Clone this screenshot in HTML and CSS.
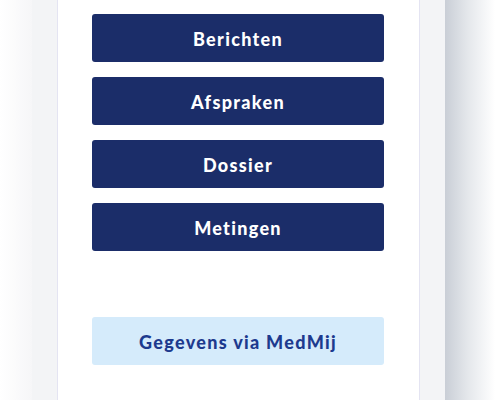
FILE: index.html
```html
<!DOCTYPE html>
<html lang="nl">
<head>
  <meta charset="UTF-8" />
  <meta name="viewport" content="width=device-width, initial-scale=1.0"/>
  <title>Menu</title>
  <link rel="stylesheet" href="styles.css">
</head>
<body>

  <div class="scene">
    <div class="edge-left"></div>
    <div class="device">
      <div class="screen">
        <nav class="menu">
          <button class="btn">Berichten</button>
          <button class="btn">Afspraken</button>
          <button class="btn">Dossier</button>
          <button class="btn">Metingen</button>
        </nav>
        <button class="btn btn-light">Gegevens via MedMij</button>
      </div>
    </div>
    <div class="edge-right"></div>
  </div>

</body>
</html>
```

FILE: styles.css
```css
* {
  box-sizing: border-box;
  margin: 0;
  padding: 0;
}

body {
  font-family: 'Lato', sans-serif;
  background-color: #ffffff;
  height: 100vh;
  overflow: hidden;
}

.scene {
  display: flex;
  height: 400px;
}

.edge-left {
  width: 32px;
  background: linear-gradient(to right, #ffffff, #f6f6f8);
}

.device {
  width: 413px;
  padding: 0 25px 0 25px;
  background-color: #f3f4f6;
}

.screen {
  height: 100%;
  background-color: #ffffff;
  border-left: 1px solid #e4e4f2;
  border-right: 1px solid #e4e4f2;
  padding: 14px 35px 0 34px;
}

.edge-right {
  flex: 1;
  background: linear-gradient(to right, #c9ced6 0%, #e4e7eb 45%, #ffffff 100%);
}

.menu {
  display: flex;
  flex-direction: column;
  gap: 15px;
  margin-bottom: 66px;
}

.btn {
  display: block;
  width: 100%;
  height: 48px;
  padding-top: 2px;
  border: none;
  border-radius: 3px;
  background-color: #1b2d69;
  color: #ffffff;
  font-family: 'Lato', sans-serif;
  font-size: 18px;
  font-weight: 900;
  letter-spacing: 1.3px;
}

.btn-light {
  background-color: #d5ebfb;
  color: #1d3a8e;
}
```
